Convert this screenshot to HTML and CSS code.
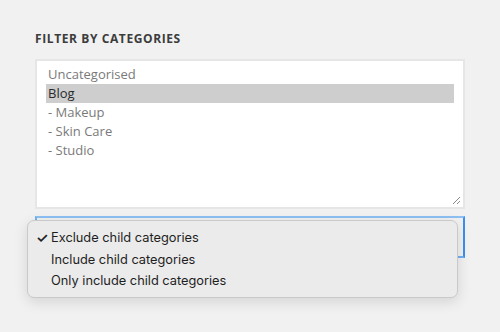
FILE: index.html
```html
<!DOCTYPE html>
<html lang="en">
<head>
    <meta charset="UTF-8">
    <meta name="viewport" content="width=device-width, initial-scale=1.0">
    <title>Filter by Categories</title>
    <link rel="stylesheet" href="styles.css">
</head>
<body>
    <div class="panel">
        <h3 class="panel-title">Filter by Categories</h3>

        <!-- Category list -->
        <div class="listbox">
            <div class="option">Uncategorised</div>
            <div class="option selected">Blog</div>
            <div class="option">- Makeup</div>
            <div class="option">- Skin Care</div>
            <div class="option">- Studio</div>
            <svg class="grip" width="9" height="9" viewBox="0 0 9 9">
                <path d="M8 1 L1 8 M8 5 L5 8" stroke="#888" stroke-width="1" fill="none"/>
            </svg>
        </div>

        <!-- Child category mode -->
        <div class="select-wrap">
            <div class="select"></div>
            <ul class="menu">
                <li><span class="check">&#10003;</span>Exclude child categories</li>
                <li><span class="check"></span>Include child categories</li>
                <li><span class="check"></span>Only include child categories</li>
            </ul>
        </div>
    </div>
</body>
</html>
```

FILE: styles.css
```css
html, body {
    min-height: 100%;
}
body {
    margin: 0;
    padding: 0;
    background-color: #f1f1f1;
    font-family: "Open Sans", sans-serif;
}
.panel {
    padding: 31px 35px 80px 35px;
}
.panel-title {
    margin: 0 0 12px 0;
    font-family: "Open Sans", sans-serif;
    font-size: 12px;
    font-weight: 700;
    text-transform: uppercase;
    letter-spacing: 0.6px;
    color: #3c3c3c;
    line-height: 16px;
}
.listbox {
    position: relative;
    height: 138px;
    background-color: #fff;
    border: 2px solid #e6e6e6;
    padding: 4px 9px;
}
.option {
    font-size: 13px;
    line-height: 19px;
    color: #7a7a7a;
    padding-left: 2px;
}
.option.selected {
    background-color: #cecece;
    color: #2a2a2a;
}
.grip {
    position: absolute;
    right: 2px;
    bottom: 2px;
}
.select-wrap {
    position: relative;
    margin-top: 7px;
}
.select {
    height: 38px;
    border: 2px solid #6fb0f0;
    border-top-color: #8cc0f3;
    border-right-color: #3b8ff0;
}
.menu {
    position: absolute;
    left: -8px;
    top: 4px;
    width: 429px;
    margin: 0;
    padding: 6px 0 5px 0;
    list-style: none;
    background-color: #ebebeb;
    border: 1px solid #c9c9c9;
    border-radius: 7px;
    box-shadow: 0 4px 14px rgba(0, 0, 0, 0.12);
    font-family: Inter, "Liberation Sans", sans-serif;
    font-size: 12.8px;
    color: #1e1e1e;
}
.menu li {
    line-height: 21.5px;
    padding-left: 8px;
    display: flex;
}
.check {
    display: inline-block;
    width: 15px;
    font-size: 14px;
    font-weight: 600;
}
```
